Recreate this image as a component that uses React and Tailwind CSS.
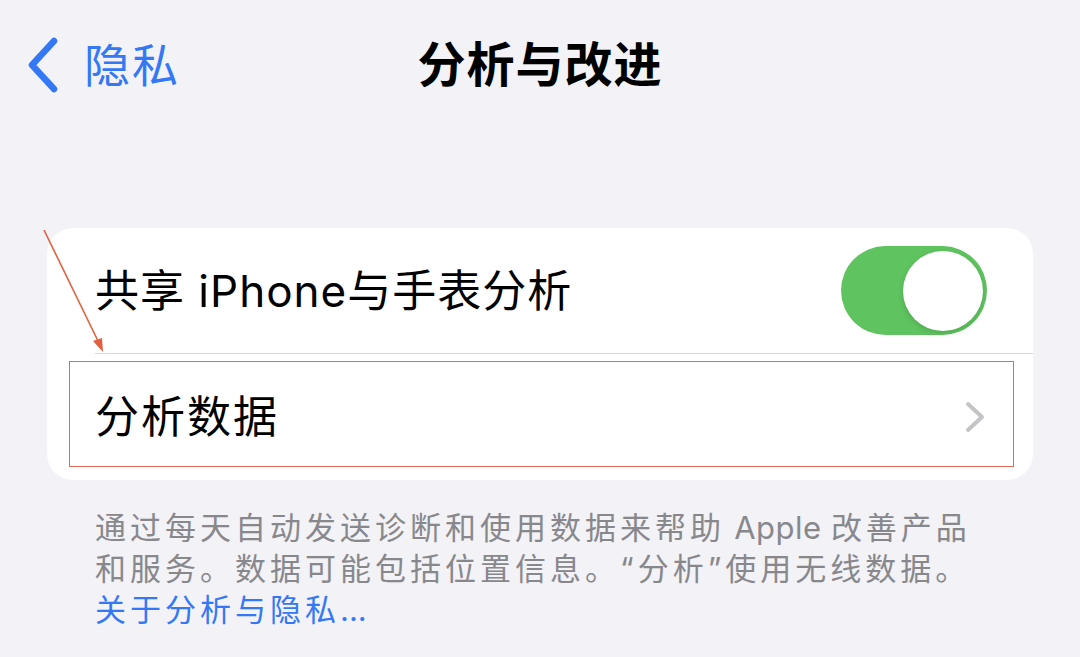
import React from "react";

const font = { fontFamily: 'Inter, "Noto Sans CJK SC", sans-serif' };

function BackChevron() {
  return (
    <svg width="34" height="56" viewBox="0 0 34 56" fill="none">
      <path d="M28 4 L6 28 L28 52" stroke="#3478f6" strokeWidth="6.5" strokeLinecap="round" strokeLinejoin="round" />
    </svg>
  );
}

function RowChevron() {
  return (
    <svg width="24" height="34" viewBox="0 0 24 34" fill="none">
      <path d="M5 4 L19 17 L5 30" stroke="#c4c4c7" strokeWidth="4" strokeLinecap="round" strokeLinejoin="round" />
    </svg>
  );
}

function Toggle() {
  return (
    <div className="w-[146px] h-[89px] rounded-full bg-[#5fc460] flex items-center justify-end pr-[4px]">
      <div className="w-[80px] h-[80px] rounded-full bg-white shadow-[0_2px_6px_rgba(0,0,0,0.15)]" />
    </div>
  );
}

export default function App() {
  return (
    <div className="relative w-full h-[657px] bg-[#f2f2f7] overflow-hidden" style={font}>
      {/* Navigation bar */}
      <div className="grid grid-cols-[1fr_auto_1fr] items-center h-[130px]">
        <div className="flex items-center gap-[24px] pl-[26px] text-[#3478f6] text-[46px] tracking-[2px] leading-none">
          <BackChevron />
          <span>隐私</span>
        </div>
        <div className="text-[48px] tracking-[1px] font-semibold text-black leading-none">分析与改进</div>
        <div />
      </div>

      {/* Settings group */}
      <div className="mt-[98px] mx-[47px] bg-white rounded-[26px]">
        <div className="h-[125px] flex items-center justify-between pl-[48px] pr-[46px]">
          <span className="text-[44px] tracking-[1px] text-black leading-none">共享 iPhone与手表分析</span>
          <Toggle />
        </div>
        <div className="ml-[48px] h-px bg-[#d8d8dc]" />
        <div className="h-[126px] flex items-center justify-between pl-[48px] pr-[46px]">
          <span className="text-[44px] tracking-[2px] text-black leading-none">分析数据</span>
          <RowChevron />
        </div>
      </div>

      {/* Footer note */}
      <div className="pt-[27px] pl-[95px] text-[31px] tracking-[4px] leading-[41px] text-[#88888c] whitespace-nowrap">
        通过每天自动发送诊断和使用数据来帮助<span className="tracking-[0.5px]"> Apple </span>改善产品
        <br />
        和服务。数据可能包括位置信息。“分析”使用无线数据。
        <br />
        <span className="text-[#3478f6]">
          关于分析与隐私<span className="tracking-normal">...</span>
        </span>
      </div>

      {/* Annotation: arrow and highlight box */}
      <svg className="absolute left-0 top-0 pointer-events-none" width="1080" height="657">
        <line x1="44" y1="230" x2="99" y2="343" stroke="#e0603f" strokeWidth="1.6" />
        <path d="M103 352 L93 341 L102 338 Z" fill="#e0603f" />
      </svg>
      <div className="absolute left-[69px] top-[361px] w-[945px] h-[106px] border-[1.5px] border-[#e06a55] pointer-events-none" />
    </div>
  );
}
